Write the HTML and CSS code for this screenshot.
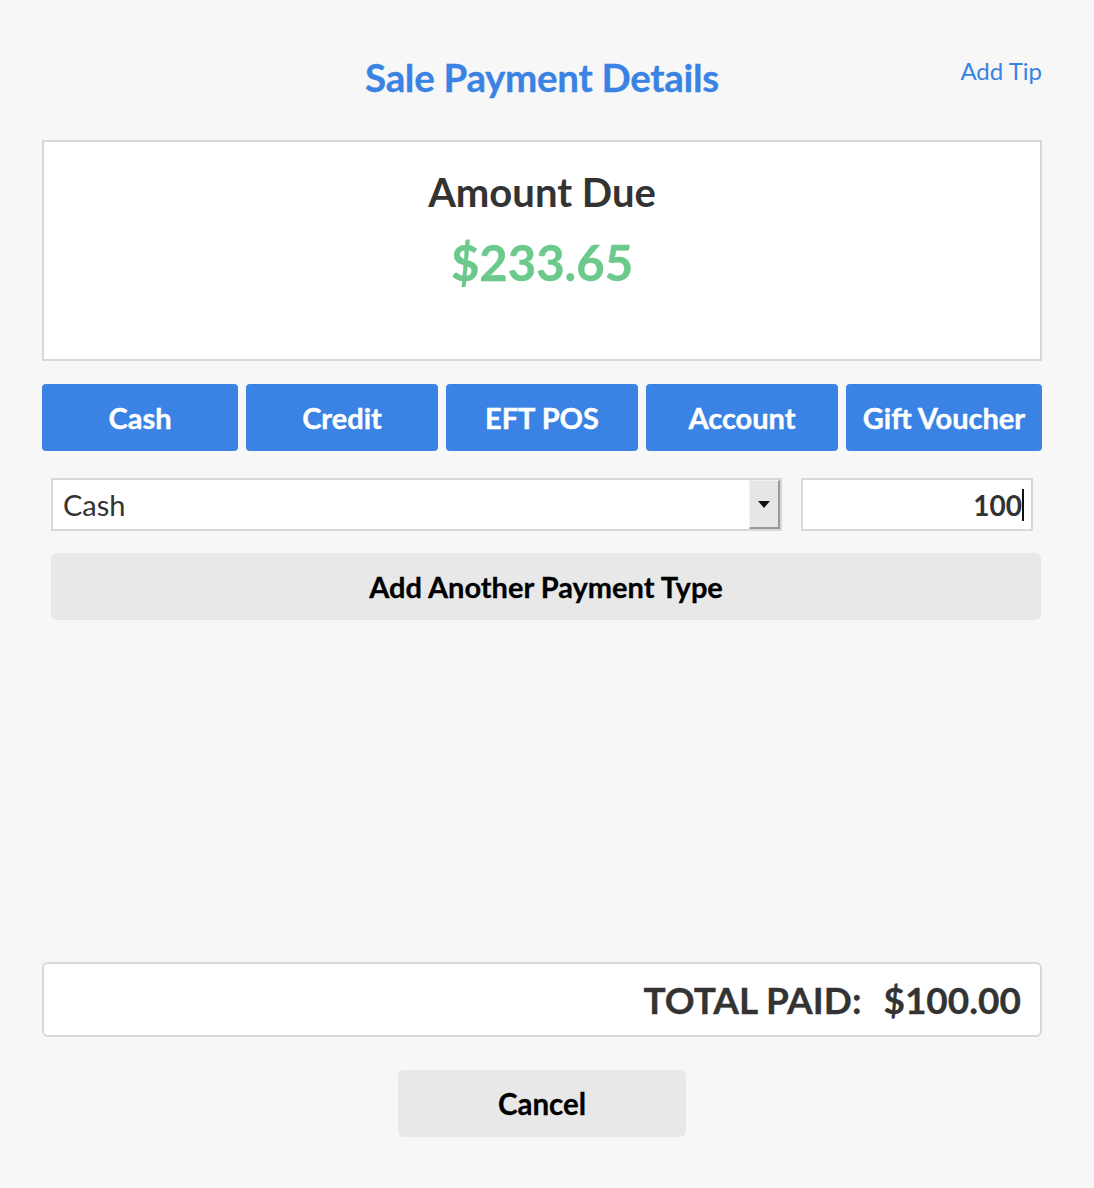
FILE: index.html
```html
<!DOCTYPE html>
<html>
<head>
    <meta name="viewport" content="width=device-width">
    <link rel="stylesheet" href="styles.css">
</head>
<body>
    <div class="page">
        <div class="header">
            <span></span>
            <h1 class="title">Sale Payment Details</h1>
            <a class="tip" href="#">Add Tip</a>
        </div>

        <div class="due">
            <div class="due-label">Amount Due</div>
            <div class="due-value">$233.65</div>
        </div>

        <div class="types">
            <button class="type wide">Cash</button>
            <button class="type">Credit</button>
            <button class="type">EFT POS</button>
            <button class="type">Account</button>
            <button class="type wide">Gift Voucher</button>
        </div>

        <div class="payments">
            <div class="row">
                <div class="select">
                    <span class="select-text">Cash</span>
                    <span class="select-arrow"><i></i></span>
                </div>
                <div class="amount"><span>100</span><span class="caret"></span></div>
            </div>
            <button class="grey-btn add">Add Another Payment Type</button>
        </div>

        <div class="total">
            <span>TOTAL PAID:</span>
            <span>$100.00</span>
        </div>

        <div class="footer">
            <button class="grey-btn cancel">Cancel</button>
        </div>
    </div>
</body>
</html>
```

FILE: styles.css
```css
body {
    margin: 0;
    background: #f7f7f7;
    color: #333;
    font-family: Lato, "Open Sans", sans-serif;
}
button {
    font-family: inherit;
    border: 0;
    cursor: pointer;
}
.page {
    width: 1000px;
    margin-left: 42px;
}
.header {
    display: grid;
    grid-template-columns: 1fr auto 1fr;
    align-items: start;
    padding-top: 53px;
    margin-bottom: 39px;
}
.title {
    margin: 0;
    font-size: 38.5px;
    line-height: 48px;
    font-weight: 700;
    color: #3a83e4;
    letter-spacing: -0.3px;
    -webkit-text-stroke: 0.3px #3a83e4;
}
.tip {
    justify-self: end;
    margin-top: 4px;
    font-size: 24px;
    line-height: 28px;
    color: #3a83e4;
    text-decoration: none;
}
.due {
    height: 217px;
    background: #fff;
    border: 2px solid #d8d8d8;
    text-align: center;
}
.due-label {
    margin-top: 27px;
    font-size: 40px;
    line-height: 46px;
    font-weight: 700;
}
.due-value {
    margin-top: 17px;
    font-size: 49px;
    line-height: 60px;
    font-weight: 700;
    color: #6bc98b;
    -webkit-text-stroke: 0.4px #6bc98b;
}
.types {
    display: flex;
    gap: 8px;
    margin-top: 23px;
}
.type {
    flex: 192px 0 0;
    height: 67px;
    border-radius: 4px;
    background: #3a83e4;
    color: #fff;
    font-size: 29px;
    font-weight: 700;
    -webkit-text-stroke: 0.4px #fff;
}
.type.wide {flex-basis: 196px}
.payments {
    padding: 0 1px 0 9px;
}
.row {
    display: flex;
    gap: 19px;
    margin-top: 27px;
    padding-right: 8px;
}
.select {
    flex: 1;
    display: flex;
    height: 53px;
    box-sizing: border-box;
    border: 2px solid #d8d8d8;
    background: #fff;
}
.select-text {
    flex: 1;
    padding-left: 10px;
    font-size: 29px;
    line-height: 49px;
}
.select-arrow {
    width: 31px;
    display: flex;
    align-items: center;
    justify-content: center;
    background: #e6e6e6;
    border-top: 1px solid #f4f4f4;
    border-left: 1px solid #f4f4f4;
    border-right: 2px solid #9a9a9a;
    border-bottom: 2px solid #9a9a9a;
    box-sizing: border-box;
}
.select-arrow i {
    width: 0;
    height: 0;
    border-left: 6px solid transparent;
    border-right: 6px solid transparent;
    border-top: 7px solid #111;
}
.amount {
    width: 232px;
    height: 53px;
    box-sizing: border-box;
    border: 2px solid #d8d8d8;
    background: #fff;
    display: flex;
    justify-content: flex-end;
    align-items: center;
    padding-right: 7px;
    font-size: 28px;
    font-weight: 700;
}
.caret {
    width: 2px;
    height: 32px;
    background: #111;
}
.grey-btn {
    background: #e8e8e8;
    color: #000;
    border-radius: 6px;
    font-size: 29px;
    font-weight: 700;
    height: 67px;
    -webkit-text-stroke: 0.3px #000;
}
.add {
    display: block;
    width: 100%;
    margin-top: 22px;
}
.total {
    margin-top: 342px;
    height: 75px;
    box-sizing: border-box;
    background: #fff;
    border: 2px solid #d8d8d8;
    border-radius: 6px;
    display: flex;
    justify-content: flex-end;
    align-items: center;
    gap: 22px;
    padding-right: 19px;
    font-size: 37px;
    font-weight: 700;
    -webkit-text-stroke: 0.3px #333;
}
.footer {
    display: flex;
    justify-content: center;
    margin-top: 33px;
}
.cancel {
    width: 288px;
    font-size: 29.5px;
}
```
